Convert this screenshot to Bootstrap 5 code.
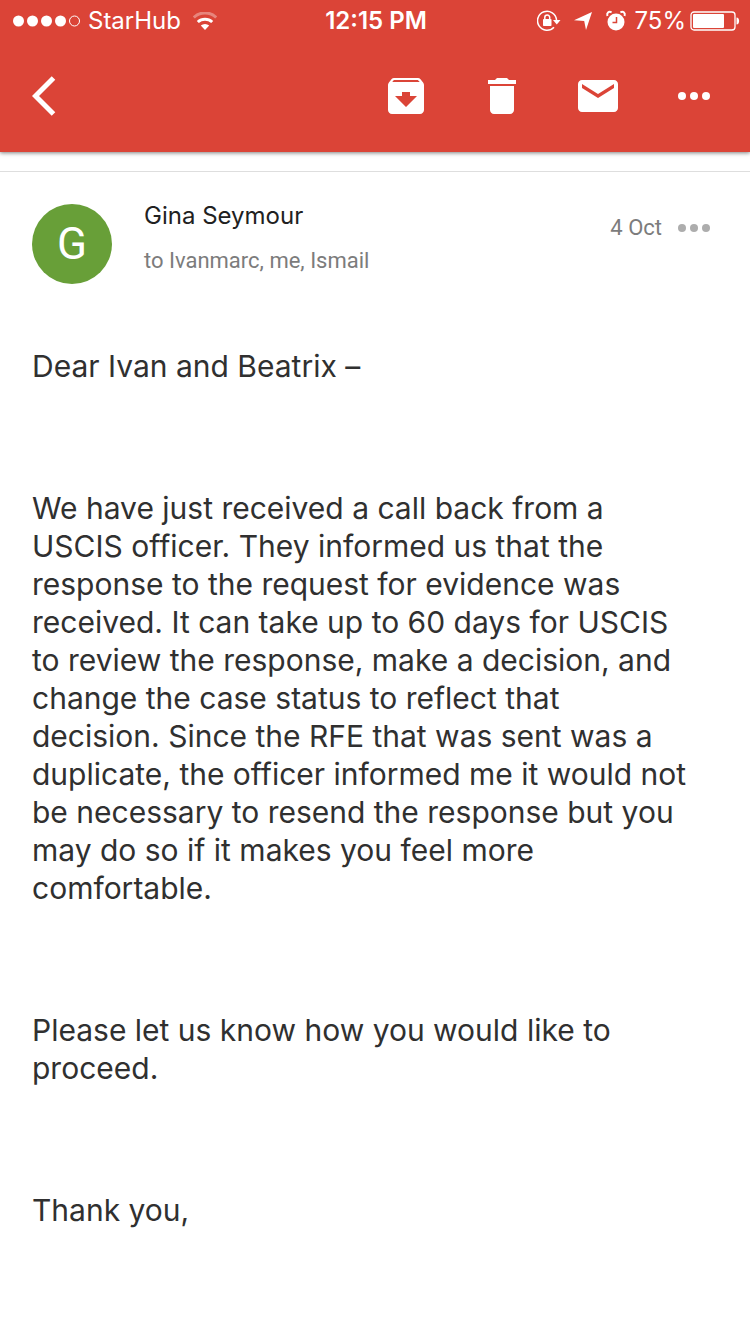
<!DOCTYPE html>
<html lang="en">
<head>
<meta charset="utf-8">
<meta name="viewport" content="width=device-width, initial-scale=1">
<title>Mail – Gina Seymour</title>
<link href="https://cdn.jsdelivr.net/npm/bootstrap@5.3.0/dist/css/bootstrap.min.css" rel="stylesheet">
<script src="https://cdn.jsdelivr.net/npm/bootstrap@5.3.0/dist/js/bootstrap.bundle.min.js" defer></script>
<style>
  body { font-family: Inter, "Liberation Sans", sans-serif; color: #303030; background: #fff; }
  svg { display: block; flex: none; }
  .app-header { background: #db4437; color: #fff; box-shadow: 0 1px 4px rgba(0,0,0,.5); }
  .status-bar { height: 40px; font-size: 24px; line-height: 36px; padding: 2px 10px 0 12px; }
  .status-side { flex: 1 1 0; }
  .clock { font-weight: 600; }
  .toolbar { height: 112px; padding: 0 32px; }
  .tool-gap { gap: 48px; }
  .icon-btn { background: none; border: 0; padding: 0; color: inherit; }
  .divider { margin-top: 19px; border-top: 1px solid #dedede; }
  .sender { padding: 32px 40px 0 32px; gap: 32px; }
  .avatar { width: 80px; height: 80px; background: #689f38; color: #fff; font-family: Roboto, sans-serif; font-size: 44px; line-height: 1; }
  .sender-name { font-size: 24px; line-height: 24px; color: #212121; margin: 0 0 21px; font-weight: 400; }
  .muted-text { font-family: Roboto, sans-serif; font-size: 22px; line-height: 24px; color: #7c7c7c; margin: 0; }
  .date-row { gap: 16px; margin-top: 12px; }
  .more-dots { color: #adadad; }
  .message { padding: 63px 56px 0 32px; font-size: 30px; line-height: 38px; }
  .message p { margin: 0 0 104px; }
</style>
</head>
<body>
<header class="app-header">
  <div class="status-bar d-flex align-items-center text-nowrap">
    <div class="status-side d-flex align-items-center gap-2">
      <svg width="68" height="12" viewBox="0 0 68 12" fill="currentColor" aria-hidden="true"><circle cx="6.500" cy="6" r="5.500"/><circle cx="20.500" cy="6" r="5.500"/><circle cx="34.500" cy="6" r="5.500"/><circle cx="48.500" cy="6" r="5.500"/><circle cx="62.500" cy="6" r="5" fill="none" stroke="currentColor"/></svg>
      <span>StarHub</span>
      <svg class="ms-1" width="24" height="18" viewBox="0 0 24 18" fill="none" stroke="currentColor" aria-hidden="true"><path d="M.8 5.500a16 16 0 0 1 22.400 0" stroke-width="3" opacity=".35"/><path d="M4.800 10a10.500 10.500 0 0 1 14.400 0" stroke-width="3"/><path d="M12 18 7.800 13.600a6.300 6.300 0 0 1 8.400 0Z" fill="currentColor" stroke="none"/></svg>
    </div>
    <time class="clock">12:15 PM</time>
    <div class="status-side d-flex align-items-center justify-content-end">
      <svg class="me-2" width="24" height="22" viewBox="0 0 24 22" fill="currentColor" aria-hidden="true"><path d="M19.500 10A9.500 9.500 0 1 0 17 17.200" fill="none" stroke="currentColor" stroke-width="1.500"/><path d="M16 10h7.500l-3.700 4.500Z"/><rect x="6" y="9" width="8.500" height="7" rx=".8"/><path d="M7.800 9.500V7.500a2.400 2.500 0 0 1 4.900 0v2" fill="none" stroke="currentColor" stroke-width="1.500"/></svg>
      <svg class="mx-1" width="20" height="20" viewBox="0 0 20 20" fill="currentColor" aria-hidden="true"><path d="M19 1 13 19 11.200 10 1 9.200Z"/></svg>
      <svg class="mx-2" width="22" height="22" viewBox="0 0 22 22" fill="currentColor" aria-hidden="true"><circle cx="11" cy="12" r="8.500"/><path d="M2.400 6C1.500 2.500 3.500 1.200 6.600 2.200M19.600 6C20.500 2.500 18.500 1.200 15.400 2.200" fill="none" stroke="currentColor" stroke-width="2"/><path d="M11.500 7v5.500H7.500" fill="none" stroke="#db4437" stroke-width="1.500"/></svg>
      <span class="me-1">75%</span>
      <svg width="50" height="20" viewBox="0 0 50 20" fill="currentColor" aria-hidden="true"><rect x="1" y="1" width="44" height="18" rx="3" fill="none" stroke="currentColor" stroke-width="1.300"/><rect x="3" y="3" width="31" height="14" rx="1"/><path d="M46.500 6.500c3.500 0 3.500 7 0 7Z"/></svg>
    </div>
  </div>
  <nav class="toolbar d-flex align-items-center justify-content-between" aria-label="Message actions">
    <button class="icon-btn" type="button" aria-label="Back"><svg width="24" height="40" viewBox="0 0 24 40"><path d="M21.500 2 3.500 20 21.500 38" fill="none" stroke="currentColor" stroke-width="5"/></svg></button>
    <div class="tool-gap d-flex">
      <button class="icon-btn" type="button" aria-label="Archive"><svg width="48" height="48" viewBox="0 0 24 24" fill="currentColor"><path d="M20.540 5.230l-1.390-1.680C18.880 3.210 18.470 3 18 3H6c-.47 0-.88.21-1.160.55L3.460 5.230C3.170 5.570 3 6.020 3 6.500V19c0 1.100.9 2 2 2h14c1.100 0 2-.9 2-2V6.500c0-.48-.17-.93-.46-1.270zM12 17.500L6.500 12H10v-2h4v2h3.500L12 17.500zM5.120 5l.81-1h12l.94 1H5.120z"/></svg></button>
      <button class="icon-btn" type="button" aria-label="Delete"><svg width="48" height="48" viewBox="0 0 24 24" fill="currentColor"><path d="M6 19c0 1.100.9 2 2 2h8c1.100 0 2-.9 2-2V7H6v12zM19 4h-3.500l-1-1h-5l-1 1H5v2h14V4z"/></svg></button>
      <button class="icon-btn" type="button" aria-label="Mark as unread"><svg width="48" height="48" viewBox="0 0 24 24" fill="currentColor"><path d="M20 4H4c-1.100 0-1.990.9-1.990 2L2 18c0 1.100.9 2 2 2h16c1.100 0 2-.9 2-2V6c0-1.100-.9-2-2-2zm0 4l-8 5-8-5V6l8 5 8-5v2z"/></svg></button>
      <button class="icon-btn" type="button" aria-label="More"><svg width="48" height="48" viewBox="0 0 48 48" fill="currentColor"><circle cx="12" cy="24" r="4"/><circle cx="24" cy="24" r="4"/><circle cx="36" cy="24" r="4"/></svg></button>
    </div>
  </nav>
</header>
<main class="divider">
  <section class="sender d-flex align-items-start">
    <div class="avatar rounded-circle d-flex flex-shrink-0 align-items-center justify-content-center">G</div>
    <div class="flex-grow-1">
      <h1 class="sender-name">Gina Seymour</h1>
      <p class="muted-text">to Ivanmarc, me, Ismail</p>
    </div>
    <div class="date-row d-flex align-items-center text-nowrap">
      <time class="muted-text">4 Oct</time>
      <button class="icon-btn more-dots" type="button" aria-label="Message options"><svg width="32" height="8" viewBox="0 0 32 8" fill="currentColor"><circle cx="4" cy="4" r="4"/><circle cx="16" cy="4" r="4"/><circle cx="28" cy="4" r="4"/></svg></button>
    </div>
  </section>
  <article class="message">
    <p>Dear Ivan and Beatrix –</p>
    <p>We have just received a call back from a USCIS officer. They informed us that the response to the request for evidence was received. It can take up to 60 days for USCIS to review the response, make a decision, and change the case status to reflect that decision. Since the RFE that was sent was a duplicate, the officer informed me it would not be necessary to resend the response but you may do so if it makes you feel more comfortable.</p>
    <p>Please let us know how you would like to proceed.</p>
    <p>Thank you,</p>
  </article>
</main>
</body>
</html>
